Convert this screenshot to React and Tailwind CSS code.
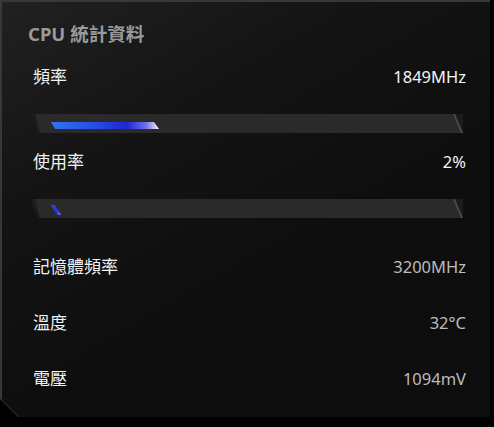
import React from 'react';

const font = "font-['Noto_Sans','Noto_Sans_CJK_TC',sans-serif]";

const StatBar = ({ fill }) => (
  <div className="relative w-[433px] h-[19px] ml-[30px]">
    <div className="absolute inset-0 bg-[#1c1c1c] [clip-path:polygon(0_0,100%_0,100%_100%,8px_100%)]"></div>
    <div className="absolute inset-0 bg-[#2a2a2a] [clip-path:polygon(5px_0,calc(100%-10px)_0,100%_100%,10px_100%)]"></div>
    <div className="absolute inset-0 bg-[#4a4a4a] [clip-path:polygon(calc(100%-10px)_0,calc(100%-8px)_0,100%_100%,calc(100%-2px)_100%)]"></div>
    {fill === 'freq' && (
      <div className="absolute left-[21px] top-[8px] w-[108px] h-[7px] bg-[linear-gradient(90deg,#2f72ee_0%,#2650e4_40%,#1f26d6_70%,#6f70ea_88%,#c8c8f6_96%,#ffffff_100%)] [clip-path:polygon(0_0,calc(100%-5px)_0,100%_100%,4px_100%)]"></div>
    )}
    {fill === 'usage' && (
      <div className="absolute left-[21px] top-[6px] w-[10px] h-[10px] bg-[linear-gradient(90deg,#2f5ae8_0%,#2030d8_60%,#8890f0_100%)] [clip-path:polygon(0_0,4px_0,100%_100%,6px_100%)]"></div>
    )}
  </div>
);

const Row = ({ label, value, dim, className }) => (
  <div className={`flex items-center justify-between h-[24px] pl-[33px] pr-[24px] ${className}`}>
    <span className="text-[17px] text-[#f2f2f2]">{label}</span>
    <span className={`text-[16.5px] ${dim ? 'text-[#bcbcbc]' : 'text-[#f4f4f4]'}`}>{value}</span>
  </div>
);

export default function App() {
  return (
    <div className={`w-[494px] h-[427px] bg-black ${font}`}>
      <div className="w-[490px] h-[417px] bg-[#383838] [clip-path:polygon(0_0,100%_0,100%_100%,18px_100%,0_calc(100%-18px))]">
        <div className="w-[490px] h-[417px] bg-[linear-gradient(150deg,#212121_0%,#141414_30%,#0e0e0e_60%,#0d0d0d_100%)] [clip-path:polygon(2px_2px,100%_2px,100%_100%,19px_100%,2px_calc(100%-17px))] flex flex-col">
          <div className="mt-[22px] pl-[28px] h-[24px] leading-[24px] text-[18.5px] font-bold text-[#9a9a9a]">
            CPU 統計資料
          </div>
          <Row label="頻率" value="1849MHz" className="mt-[19px]" />
          <div className="mt-[25px]"><StatBar fill="freq" /></div>
          <Row label="使用率" value="2%" className="mt-[17px]" />
          <div className="mt-[25px]"><StatBar fill="usage" /></div>
          <Row label="記憶體頻率" value="3200MHz" dim className="mt-[37px]" />
          <Row label="溫度" value="32°C" dim className="mt-[32px]" />
          <Row label="電壓" value="1094mV" dim className="mt-[32px]" />
        </div>
      </div>
    </div>
  );
}
